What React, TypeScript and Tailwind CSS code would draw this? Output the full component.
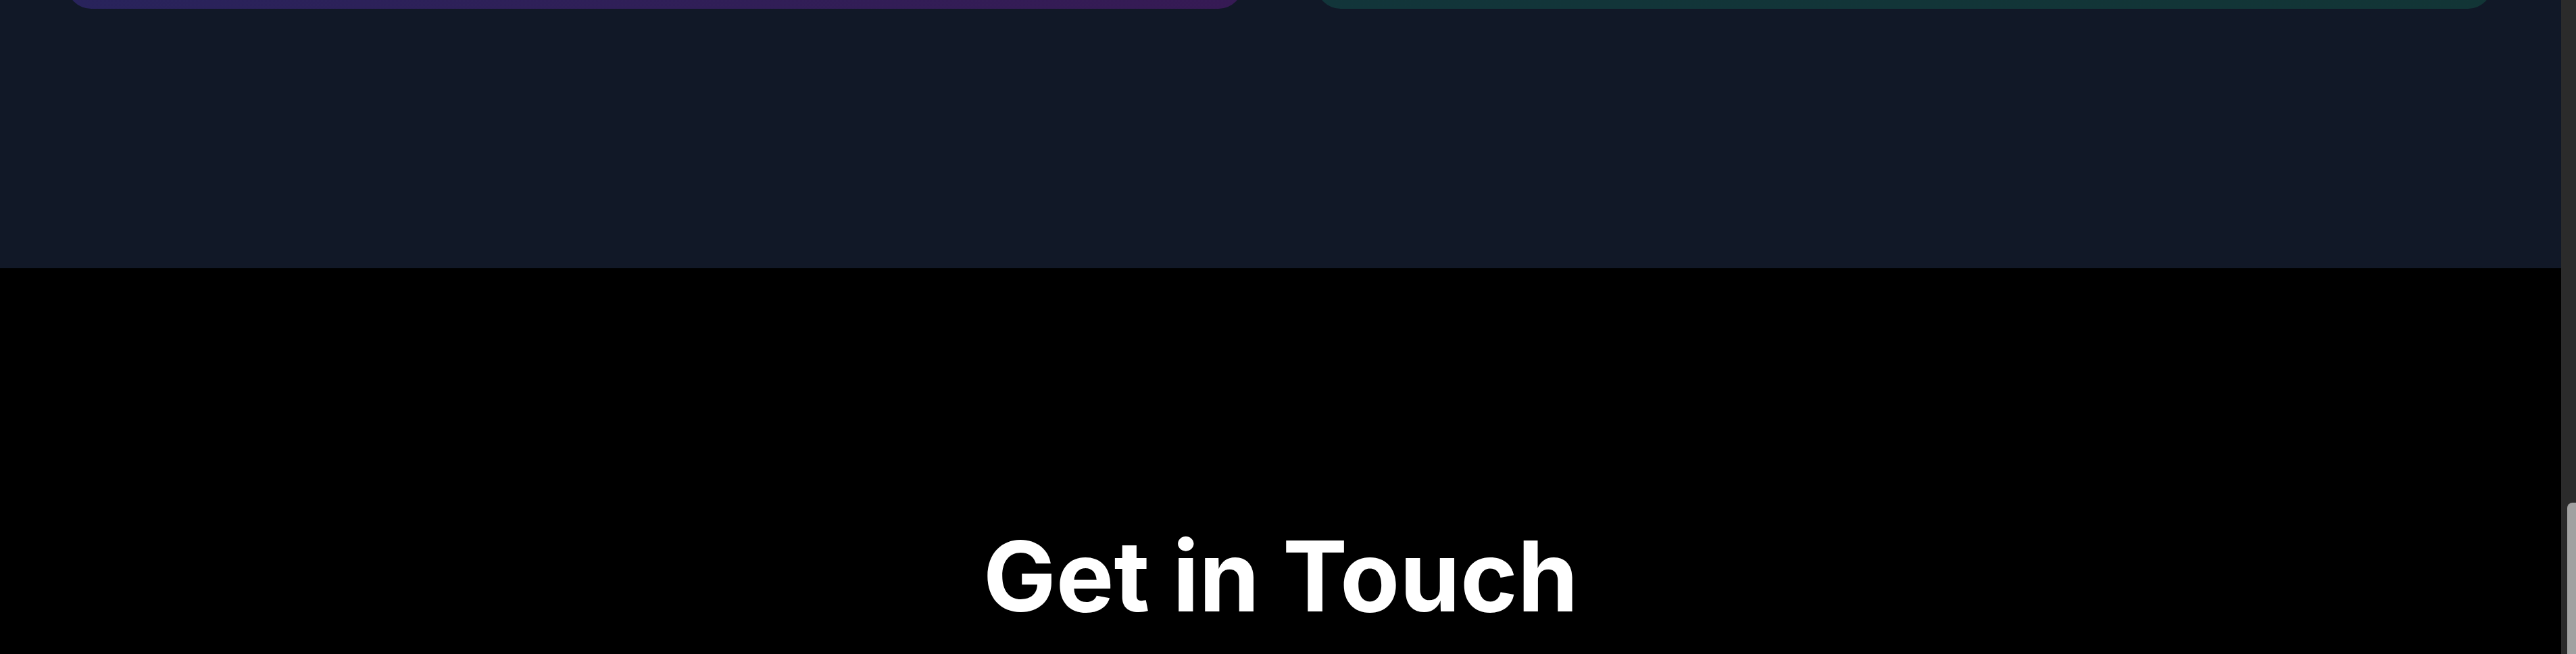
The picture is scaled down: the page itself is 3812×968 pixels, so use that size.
export default function App() {
  return (
    <div className="flex h-[968px] w-full overflow-hidden bg-black" style={{ fontFamily: "Inter, 'Noto Sans', sans-serif" }}>
      <main className="flex-1 min-w-0 overflow-hidden">
        {/* tail of the feature cards section, page scrolled down */}
        <section className="bg-[#111827] -mt-[227px] pb-[384px]">
          <div className="grid grid-cols-2 gap-[109px] pl-[99px] pr-[102px]">
            <div className="h-[240px] rounded-[36px] bg-gradient-to-r from-[#28235b] to-[#361a54]" />
            <div className="h-[240px] rounded-[36px] bg-gradient-to-r from-[#12353a] to-[#123536]" />
          </div>
        </section>

        <section className="bg-black pt-[384px]">
          <h2 className="text-center text-[144px] leading-none font-bold text-white">
            Get in Touch
          </h2>
        </section>
      </main>

      {/* scrollbar as captured */}
      <aside className="w-[22px] shrink-0 bg-[#2b2b2b] pt-[744px] pl-[9px]">
        <div className="h-full rounded-tl-[8px] bg-[#a1a1a1]" />
      </aside>
    </div>
  );
}
